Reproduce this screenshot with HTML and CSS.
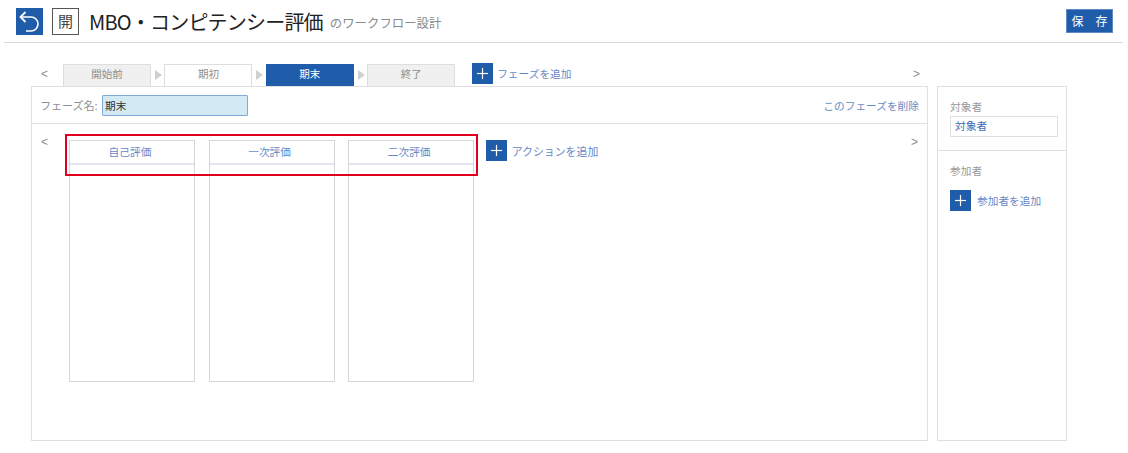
FILE: index.html
```html
<!DOCTYPE html>
<html lang="ja">
<head>
<meta charset="utf-8">
<title>MBO・コンピテンシー評価</title>
<link rel="stylesheet" href="styles.css">
</head>
<body>
<header class="header">
  <button class="back" aria-label="戻る">
    <svg width="27" height="27" viewBox="0 0 27 27"><path d="M9.5 4 L4.5 9 L9.5 14" fill="none" stroke="#fff" stroke-width="1.8"/><path d="M5 9 H15 A7 7 0 0 1 15 23 H10" fill="none" stroke="#fff" stroke-width="1.6"/></svg>
  </button>
  <span class="status">開</span>
  <h1 class="title">MBO・コンピテンシー評価</h1>
  <span class="subtitle">のワークフロー設計</span>
  <button class="save">保　存</button>
</header>
<div class="tabs-row">
  <span class="nav nav-prev">&lt;</span>
  <div class="tab tab-gray">開始前</div>
  <span class="arrow"></span>
  <div class="tab">期初</div>
  <span class="arrow"></span>
  <div class="tab tab-active">期末</div>
  <span class="arrow"></span>
  <div class="tab tab-gray">終了</div>
  <a class="add add-phase"><span class="plus"></span><span>フェーズを追加</span></a>
  <span class="nav nav-next">&gt;</span>
</div>
<div class="workspace">
  <main class="panel">
    <div class="phase-row">
      <label class="phase-label">フェーズ名:</label>
      <input class="phase-input" value="期末">
      <a class="delete">このフェーズを削除</a>
    </div>
    <div class="actions">
      <span class="nav nav-prev2">&lt;</span>
      <div class="column"><div class="column-head">自己評価</div></div>
      <div class="column"><div class="column-head">一次評価</div></div>
      <div class="column"><div class="column-head">二次評価</div></div>
      <a class="add add-action"><span class="plus"></span><span>アクションを追加</span></a>
      <span class="nav nav-next2">&gt;</span>
      <div class="highlight"></div>
    </div>
  </main>
  <aside class="side">
    <section class="side-top">
      <div class="side-label">対象者</div>
      <div class="target">対象者</div>
    </section>
    <section class="side-bottom">
      <div class="side-label">参加者</div>
      <a class="add add-member"><span class="plus"></span><span>参加者を追加</span></a>
    </section>
  </aside>
</div>
</body>
</html>
```
FILE: styles.css
```css
* { box-sizing: border-box; }
html, body { margin: 0; height: 100%; background: #fff; overflow: hidden; }
body { font-family: "Noto Sans CJK JP", "Noto Sans", sans-serif; font-size: 10.7px; color: #999; }
a { color: #6689c6; }
.header { display: flex; align-items: center; height: 43px; margin: 0 5px 0 4px; padding: 0 10px 0 12px; border-bottom: 1px solid #d9d9d9; }
.back { width: 27px; height: 27px; padding: 0; border: 0; background: #1f5dab; display: block; flex: none; }
.back svg { display: block; }
.status { width: 27px; height: 27px; margin-left: 9px; border: 1.5px solid #555; color: #444; font-size: 15px; line-height: 23px; text-align: center; flex: none; }
.title { margin: 0 0 0 10px; font-size: 20px; font-weight: 400; color: #222; letter-spacing: -0.8px; white-space: nowrap; }
.subtitle { margin: 4px 0 0 7px; font-size: 12.4px; color: #8a8a8a; }
.save { margin-left: auto; width: 47px; height: 24px; padding: 0; border: 1px solid #5e8bc6; background: #1f5dab; color: #fff; font-family: inherit; font-size: 12px; margin-top: -1px; }
.tabs-row { display: flex; align-items: flex-end; height: 43px; margin-left: 41px; width: 887px; position: relative; }
.nav { color: #8c8c8c; font-size: 12px; font-family: "Liberation Sans", sans-serif; }
.nav-prev { width: 22px; align-self: flex-end; padding-bottom: 5px; }
.nav-next { position: absolute; right: 8px; bottom: 5px; }
.tab { width: 88px; height: 22px; border: 1px solid #ddd; border-bottom: 0; text-align: center; font-size: 10.5px; line-height: 17px; color: #8e8e8e; background: #fff; }
.tab-gray { background: #f0f0f0; }
.tab-active { background: #1f5dab; border-color: #1f5dab; color: #fff; }
.arrow { width: 0; height: 0; margin: 0 2.4px 6px 4px; border-left: 7px solid #cfcfcf; border-top: 5px solid transparent; border-bottom: 5px solid transparent; flex: none; }
.add { display: flex; align-items: center; gap: 5px; font-size: 10.7px; white-space: nowrap; }
.plus { width: 21px; height: 21px; background: #1f5dab; position: relative; flex: none; display: block; }
.plus::before { content: ""; position: absolute; left: 5px; top: 10px; width: 11px; height: 1px; background: #fff; box-shadow: 0 0 1px #fff; }
.plus::after { content: ""; position: absolute; left: 10px; top: 5px; width: 1px; height: 11px; background: #fff; box-shadow: 0 0 1px #fff; }
.add-phase { margin-left: 17px; padding-bottom: 2px; gap: 4px; }
.workspace { display: flex; gap: 9px; margin-left: 31px; }
.panel { width: 897px; height: 355px; border: 1px solid #e0e0e0; display: flex; flex-direction: column; }
.phase-row { display: flex; align-items: center; height: 37px; padding: 0 8px 0 8px; border-bottom: 1px solid #e0e0e0; }
.phase-label { font-size: 11px; color: #8f8f8f; }
.phase-input { width: 146px; height: 21px; margin-left: 4.5px; padding: 0 2px; border: 1px solid #7fa9d6; border-radius: 1px; background: #d3eaf5; font-family: inherit; font-size: 10.7px; color: #333; }
.delete { margin-left: auto; font-size: 10.7px; }
.actions { position: relative; display: flex; align-items: flex-start; padding: 16px 0 0 37px; flex: 1; gap: 13.6px; }
.nav-prev2 { position: absolute; left: 9px; top: 11px; }
.nav-next2 { position: absolute; right: 9px; top: 11px; }
.column { width: 126px; height: 242px; border: 1px solid #d6d6d6; flex: none; }
.column-head { height: 24px; padding-right: 4px; border-bottom: 2px solid #e4e4ee; text-align: center; font-size: 10.7px; line-height: 21px; color: #6689c6; }
.add-action { margin: 0 0 0 -1.6px; font-size: 10.9px; gap: 4.5px; }
.highlight { position: absolute; left: 33px; top: 10px; width: 413px; height: 42px; border: 2px solid #e0001b; pointer-events: none; }
.side { width: 130px; height: 355px; border: 1px solid #e0e0e0; }
.side-top { height: 64px; padding: 12px 8px 0 12px; border-bottom: 1px solid #e0e0e0; }
.side-label { font-size: 10.7px; line-height: 16px; color: #999; }
.target { width: 108px; height: 21px; margin-top: 1px; padding-left: 4px; border: 1px solid #e0e0e0; font-size: 10.7px; line-height: 18px; color: #3b6db5; }
.side-bottom { padding: 12px 8px 0 12px; }
.add-member { margin-top: 11px; gap: 6px; }
```
